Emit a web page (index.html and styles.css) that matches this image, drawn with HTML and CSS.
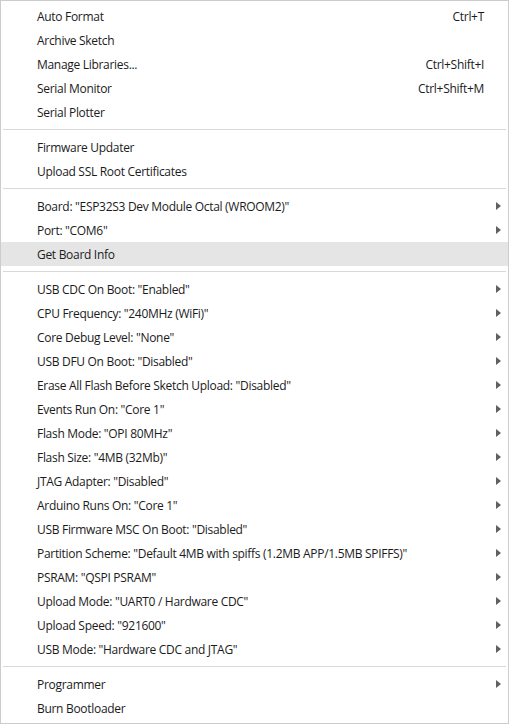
FILE: index.html
```html
<!DOCTYPE html>
<html>
<head>
<meta charset="utf-8">
<link rel="stylesheet" href="styles.css">
</head>
<body>
<div class="menu">
  <div class="item"><span class="label">Auto Format</span><span class="key">Ctrl+T</span><span class="sub"></span></div>
  <div class="item"><span class="label">Archive Sketch</span><span class="key"></span><span class="sub"></span></div>
  <div class="item"><span class="label">Manage Libraries...</span><span class="key">Ctrl+Shift+I</span><span class="sub"></span></div>
  <div class="item"><span class="label">Serial Monitor</span><span class="key">Ctrl+Shift+M</span><span class="sub"></span></div>
  <div class="item"><span class="label">Serial Plotter</span><span class="key"></span><span class="sub"></span></div>
  <div class="sep"></div>
  <div class="item"><span class="label">Firmware Updater</span><span class="key"></span><span class="sub"></span></div>
  <div class="item"><span class="label">Upload SSL Root Certificates</span><span class="key"></span><span class="sub"></span></div>
  <div class="sep"></div>
  <div class="item"><span class="label">Board: "ESP32S3 Dev Module Octal (WROOM2)"</span><span class="key"></span><span class="sub arrow"></span></div>
  <div class="item"><span class="label">Port: "COM6"</span><span class="key"></span><span class="sub arrow"></span></div>
  <div class="item hover"><span class="label">Get Board Info</span><span class="key"></span><span class="sub"></span></div>
  <div class="sep"></div>
  <div class="item"><span class="label">USB CDC On Boot: "Enabled"</span><span class="key"></span><span class="sub arrow"></span></div>
  <div class="item"><span class="label">CPU Frequency: "240MHz (WiFi)"</span><span class="key"></span><span class="sub arrow"></span></div>
  <div class="item"><span class="label">Core Debug Level: "None"</span><span class="key"></span><span class="sub arrow"></span></div>
  <div class="item"><span class="label">USB DFU On Boot: "Disabled"</span><span class="key"></span><span class="sub arrow"></span></div>
  <div class="item"><span class="label">Erase All Flash Before Sketch Upload: "Disabled"</span><span class="key"></span><span class="sub arrow"></span></div>
  <div class="item"><span class="label">Events Run On: "Core 1"</span><span class="key"></span><span class="sub arrow"></span></div>
  <div class="item"><span class="label">Flash Mode: "OPI 80MHz"</span><span class="key"></span><span class="sub arrow"></span></div>
  <div class="item"><span class="label">Flash Size: "4MB (32Mb)"</span><span class="key"></span><span class="sub arrow"></span></div>
  <div class="item"><span class="label">JTAG Adapter: "Disabled"</span><span class="key"></span><span class="sub arrow"></span></div>
  <div class="item"><span class="label">Arduino Runs On: "Core 1"</span><span class="key"></span><span class="sub arrow"></span></div>
  <div class="item"><span class="label">USB Firmware MSC On Boot: "Disabled"</span><span class="key"></span><span class="sub arrow"></span></div>
  <div class="item"><span class="label">Partition Scheme: "Default 4MB with spiffs (1.2MB APP/1.5MB SPIFFS)"</span><span class="key"></span><span class="sub arrow"></span></div>
  <div class="item"><span class="label">PSRAM: "QSPI PSRAM"</span><span class="key"></span><span class="sub arrow"></span></div>
  <div class="item"><span class="label">Upload Mode: "UART0 / Hardware CDC"</span><span class="key"></span><span class="sub arrow"></span></div>
  <div class="item"><span class="label">Upload Speed: "921600"</span><span class="key"></span><span class="sub arrow"></span></div>
  <div class="item"><span class="label">USB Mode: "Hardware CDC and JTAG"</span><span class="key"></span><span class="sub arrow"></span></div>
  <div class="sep"></div>
  <div class="item"><span class="label">Programmer</span><span class="key"></span><span class="sub arrow"></span></div>
  <div class="item"><span class="label">Burn Bootloader</span><span class="key"></span><span class="sub"></span></div>
</div>
</body>
</html>
```
FILE: styles.css
```css
html, body {
  margin: 0;
  padding: 0;
  background: #ffffff;
}
.menu {
  width: 509px;
  height: 724px;
  box-sizing: border-box;
  border: 1px solid #cccccc;
  padding: 3px 0;
  font-family: "Open Sans", "Noto Sans", sans-serif;
  font-size: 12px;
  letter-spacing: -0.3px;
  color: #1b1b1b;
}
.item {
  display: flex;
  align-items: center;
  height: 24px;
  padding-left: 36px;
}
.item.hover {
  background: #e5e5e5;
}
.label {
  flex: 1;
  white-space: nowrap;
}
.key {
  white-space: nowrap;
}
.sub {
  width: 24px;
  height: 24px;
  display: flex;
  align-items: center;
}
.sub.arrow::before {
  content: "";
  margin-left: 12px;
  width: 0;
  height: 0;
  border-top: 4px solid transparent;
  border-bottom: 4px solid transparent;
  border-left: 5px solid #606060;
}
.sep {
  height: 1px;
  margin: 5px 2px;
  background: #d9d9d9;
}
```
